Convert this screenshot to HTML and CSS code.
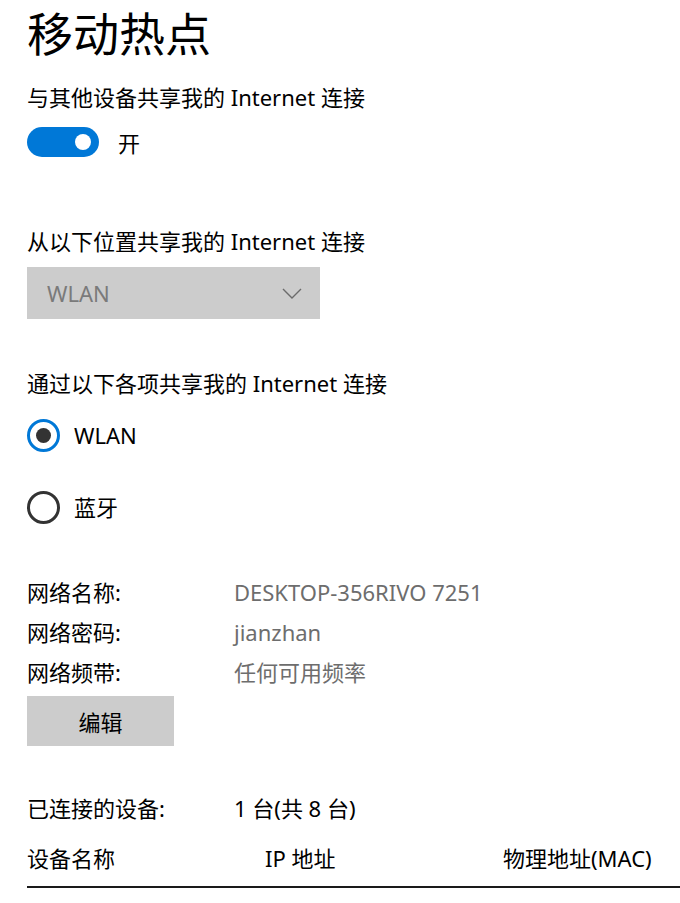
FILE: index.html
```html
<!DOCTYPE html>
<html lang="zh-CN">
<head>
  <meta charset="UTF-8">
  <title>移动热点</title>
  <link rel="stylesheet" href="styles.css">
</head>
<body>

  <h1 class="title">移动热点</h1>

  <section class="share">
    <p class="label">与其他设备共享我的 Internet 连接</p>
    <div class="toggle-row">
      <span class="toggle"><span class="knob"></span></span>
      <span>开</span>
    </div>
  </section>

  <section class="source">
    <p class="label">从以下位置共享我的 Internet 连接</p>
    <div class="select">
      <span>WLAN</span>
      <svg class="chevron" width="20" height="11" viewBox="0 0 20 11">
        <path d="M1 1 L10 10 L19 1" fill="none" stroke="#6b6b6b" stroke-width="1.4"/>
      </svg>
    </div>
  </section>

  <section class="via">
    <p class="label">通过以下各项共享我的 Internet 连接</p>
    <label class="radio checked"><span class="dot"></span>WLAN</label>
    <label class="radio"><span class="dot"></span>蓝牙</label>
  </section>

  <section class="info">
    <div class="info-row"><span class="key">网络名称:</span><span class="val">DESKTOP-356RIVO 7251</span></div>
    <div class="info-row"><span class="key">网络密码:</span><span class="val">jianzhan</span></div>
    <div class="info-row"><span class="key">网络频带:</span><span class="val">任何可用频率</span></div>
    <button class="edit">编辑</button>
  </section>

  <section class="devices">
    <div class="info-row"><span class="key">已连接的设备:</span><span class="count">1 台(共 8 台)</span></div>
    <div class="table-head">
      <span>设备名称</span>
      <span>IP 地址</span>
      <span>物理地址(MAC)</span>
    </div>
  </section>

</body>
</html>
```

FILE: styles.css
```css
* {
  margin: 0;
  padding: 0;
  box-sizing: border-box;
}

html, body {
  background: #ffffff;
  color: #000000;
  font-family: "Noto Sans", "Noto Sans CJK SC", sans-serif;
  font-size: 22px;
  overflow-x: hidden;
}

body {
  padding-left: 27px;
}

.title {
  font-size: 46px;
  font-weight: normal;
  line-height: 56px;
  margin-top: 5px;
}

.label {
  line-height: 30px;
}

.share {
  margin-top: 21px;
}

.toggle-row {
  display: flex;
  align-items: center;
  gap: 19px;
  margin-top: 15px;
  height: 30px;
}

.toggle {
  width: 72px;
  height: 30px;
  border-radius: 15px;
  background: #0078d7;
  display: flex;
  align-items: center;
  justify-content: flex-end;
  padding-right: 8px;
}

.knob {
  width: 16px;
  height: 16px;
  border-radius: 50%;
  background: #ffffff;
}

.source {
  margin-top: 69px;
}

.select {
  margin-top: 11px;
  width: 293px;
  height: 52px;
  background: #cccccc;
  color: #7a7a7a;
  display: flex;
  align-items: center;
  justify-content: space-between;
  padding: 0 18px 0 20px;
}

.via {
  margin-top: 49px;
}

.radio {
  display: flex;
  align-items: center;
  gap: 14px;
  height: 32px;
  line-height: 32px;
  margin-top: 21px;
}

.radio + .radio {
  margin-top: 40px;
}

.dot {
  width: 33px;
  height: 33px;
  border-radius: 50%;
  border: 3px solid #333333;
  display: flex;
  align-items: center;
  justify-content: center;
}

.radio.checked .dot {
  border-color: #0078d7;
}

.radio.checked .dot::after {
  content: "";
  width: 15px;
  height: 15px;
  border-radius: 50%;
  background: #333333;
}

.info {
  margin-top: 49px;
}

.info-row {
  display: flex;
  line-height: 40px;
}

.key {
  width: 207px;
}

.val {
  color: #6d6d6d;
}

.edit {
  margin-top: 4px;
  width: 147px;
  height: 50px;
  border: none;
  background: #cccccc;
  font-family: inherit;
  font-size: 22px;
  color: #000000;
}

.devices {
  margin-top: 42px;
}

.table-head {
  display: grid;
  grid-template-columns: 238px 238px auto;
  line-height: 30px;
  margin-top: 15px;
  padding-bottom: 13px;
  border-bottom: 2px solid #1a1a1a;
}
```
